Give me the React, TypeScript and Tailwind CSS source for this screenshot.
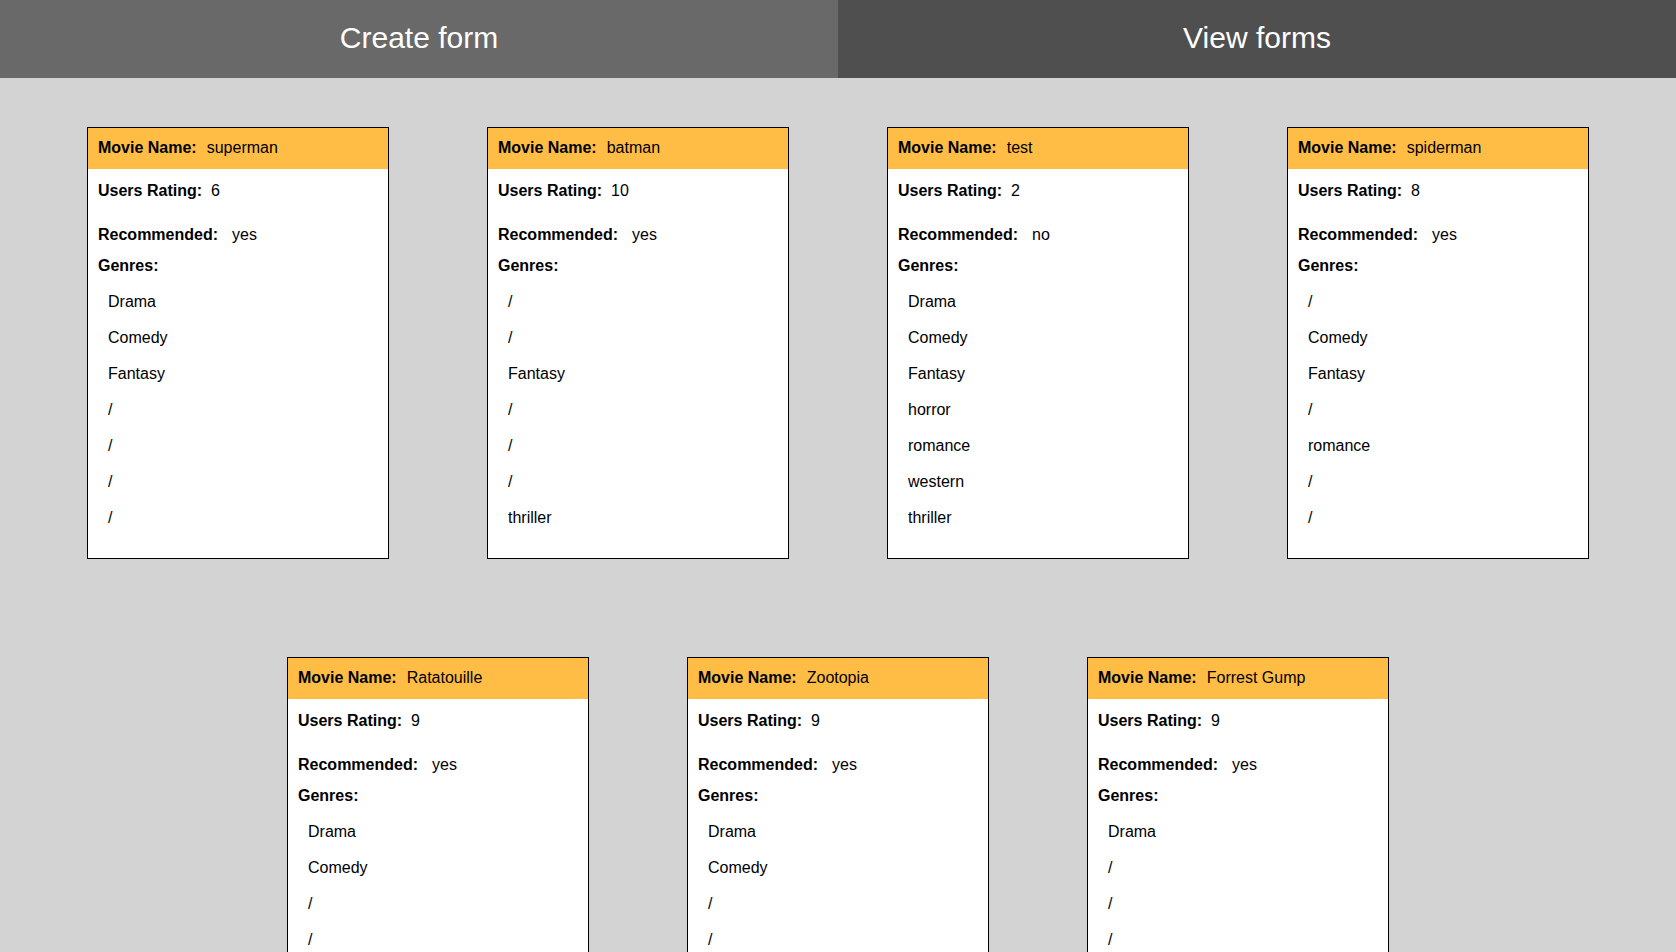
import React from "react";

type Movie = { name: string; rating: string; rec: string; genres: string[] };

const movies: Movie[] = [
  { name: "superman", rating: "6", rec: "yes", genres: ["Drama", "Comedy", "Fantasy", "/", "/", "/", "/"] },
  { name: "batman", rating: "10", rec: "yes", genres: ["/", "/", "Fantasy", "/", "/", "/", "thriller"] },
  { name: "test", rating: "2", rec: "no", genres: ["Drama", "Comedy", "Fantasy", "horror", "romance", "western", "thriller"] },
  { name: "spiderman", rating: "8", rec: "yes", genres: ["/", "Comedy", "Fantasy", "/", "romance", "/", "/"] },
  { name: "Ratatouille", rating: "9", rec: "yes", genres: ["Drama", "Comedy", "/", "/", "/", "/", "/"] },
  { name: "Zootopia", rating: "9", rec: "yes", genres: ["Drama", "Comedy", "/", "/", "/", "/", "/"] },
  { name: "Forrest Gump", rating: "9", rec: "yes", genres: ["Drama", "/", "/", "/", "/", "/", "/"] },
];

function Card({ m }: { m: Movie }) {
  return (
    <div className="w-[302px] h-[432px] shrink-0 border border-black bg-white flex flex-col text-[16px] text-black">
      <div className="h-[41px] bg-[#ffbd45] flex items-center px-[10px] pb-[2px]">
        <span className="font-bold">Movie Name:</span>
        <span className="ml-[10px]">{m.name}</span>
      </div>
      <div className="px-[10px]">
        <div className="mt-[12px] leading-[20px] flex">
          <span className="font-bold">Users Rating:</span>
          <span className="ml-[9px]">{m.rating}</span>
        </div>
        <div className="mt-[24px] leading-[20px] flex">
          <span className="font-bold">Recommended:</span>
          <span className="ml-[14px]">{m.rec}</span>
        </div>
        <div className="mt-[11px] leading-[20px] font-bold">Genres:</div>
        <div className="flex flex-col gap-[16px] mt-[16px] pl-[10px]">
          {m.genres.map((g, i) => (
            <div key={i} className="leading-[20px]">
              {g}
            </div>
          ))}
        </div>
      </div>
    </div>
  );
}

export default function App() {
  return (
    <div className="min-h-screen bg-[#d3d3d3] font-['Liberation_Sans',Arial,sans-serif]">
      <div className="flex h-[78px]">
        <div className="w-1/2 bg-[#696969] flex items-center justify-center pb-[4px] text-white text-[30px]">
          Create form
        </div>
        <div className="w-1/2 bg-[#4f4f4f] flex items-center justify-center pb-[4px] text-white text-[30px]">
          View forms
        </div>
      </div>
      <div className="flex flex-wrap justify-center gap-x-[98px] gap-y-[98px] pt-[49px] pb-[49px] px-[37px]">
        {movies.map((m, i) => (
          <Card key={i} m={m} />
        ))}
      </div>
    </div>
  );
}
